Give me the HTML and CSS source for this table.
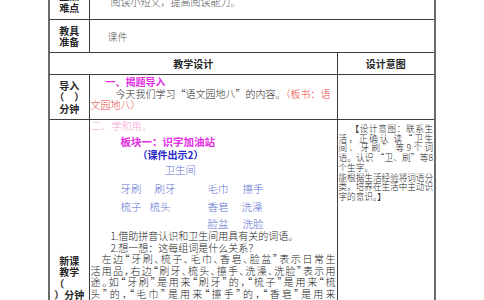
FILE: index.html
```html
<!DOCTYPE html>
<html lang="zh-CN">
<head>
<meta charset="utf-8">
<title>语文园地八 教学设计</title>
<link rel="stylesheet" href="styles.css">
</head>
<body>
<div class="page">
  <table class="plan">
    <colgroup>
      <col class="c-label">
      <col class="c-main">
      <col class="c-note">
    </colgroup>
    <tr class="r-goal">
      <th class="label">重点<br>难点</th>
      <td colspan="2" class="goal">
        <p>认识“卫、刷”等8个生字，积累词语。</p>
        <p>阅读小短文，提高阅读能力。</p>
      </td>
    </tr>
    <tr class="r-tools">
      <th class="label">教具<br>准备</th>
      <td colspan="2" class="tools">课件</td>
    </tr>
    <tr class="r-head">
      <th colspan="2" class="head">教学设计</th>
      <th class="head">设计意图</th>
    </tr>
    <tr class="r-intro">
      <th class="label">导入<br>（　）<br>分钟</th>
      <td class="main intro">
        <p class="step magenta">一、揭题导入</p>
        <p class="intro-text">今天我们学习“语文园地八”的内容。<span class="red">（板书：语<br>文园地八）</span></p>
      </td>
      <td class="note"></td>
    </tr>
    <tr class="r-new">
      <th class="label">新课<br>教学<br><span class="open">（</span><br>）分钟</th>
      <td class="main study">
        <p class="sec pink">二、学和用。</p>
        <p class="block magenta">板块一：识字加油站</p>
        <p class="show blue">（课件出示2）</p>
        <p class="place words-color">卫生间</p>
        <div class="words w1">
          <span class="pair"><span>牙刷</span><span>刷牙</span></span>
          <span class="pair"><span>毛巾</span><span>擦手</span></span>
        </div>
        <div class="words w2">
          <span class="pair"><span>梳子</span><span>梳头</span></span>
          <span class="pair"><span>香皂</span><span>洗澡</span></span>
        </div>
        <div class="words w3">
          <span class="pair"></span>
          <span class="pair"><span>脸盆</span><span>洗脸</span></span>
        </div>
        <div class="text">
          <p class="q">1.借助拼音认识和卫生间用具有关的词语。</p>
          <p class="q">2.想一想：这每组词是什么关系？</p>
          <p class="para">
            <span class="ln first">左边“牙刷、梳子、毛巾、香皂、脸盆”表示日常生</span>
            <span class="ln">活用品，右边“刷牙、梳头、擦手、洗澡、洗脸”表示用</span>
            <span class="ln">途。如“牙刷”是用来“刷牙”的，“梳子”是用来“梳</span>
            <span class="ln">头”的，“毛巾”是用来“擦手”的，“香皂”是用来</span>
            <span class="ln last">“洗澡”的，“脸盆”是用来“洗脸”的。</span>
          </p>
        </div>
      </td>
      <td class="note">
        <p class="why">
          <span class="nl first">【设计意图：联系生</span>
          <span class="nl">活，正确认 读“卫生</span>
          <span class="nl">间、牙刷” 等9个词</span>
          <span class="nl">语。认识 “卫、刷”等8</span>
          <span class="nl last">个生字。</span>
        </p>
        <p class="why">
          <span class="nl">能根据生活经验将词语分</span>
          <span class="nl">类，培养在生活中主动识</span>
          <span class="nl last">字的意识。】</span>
        </p>
      </td>
    </tr>
  </table>
</div>
</body>
</html>
```

FILE: styles.css
```css
html, body {
  margin: 0;
  padding: 0;
  background: #ffffff;
}

body {
  width: 484px;
  height: 300px;
  overflow: hidden;
  font-family: "Noto Sans CJK SC", "Noto Sans", sans-serif;
  font-size: 10px;
  color: #2b2b2b;
}

p {
  margin: 0;
}

.page {
  padding-left: 48px;
}

.plan {
  border-collapse: collapse;
  table-layout: fixed;
  width: 388px;
  margin-top: -17px;
  border-left: 2px solid #6a6a6a;
  border-right: 2px solid #6a6a6a;
}

.c-label { width: 40px; }
.c-main { width: 248px; }
.c-note { width: 98px; }

.plan th,
.plan td {
  border: 1px solid #3d3d3d;
  padding: 0;
  vertical-align: middle;
  font-weight: 300;
}

.plan .label,
.plan .head {
  font-weight: 700;
  text-align: center;
  color: #262626;
  font-size: 10px;
  line-height: 11.5px;
}

.open {
  display: inline-block;
  padding-right: 20px;
}

.r-goal { height: 36px; }
.r-tools { height: 33px; }
.r-head { height: 22px; }
.r-intro { height: 45px; }
.r-new { height: 316px; }

.plan .goal {
  vertical-align: top;
  padding-left: 21px;
  color: #555;
  line-height: 12px;
}

.plan .tools {
  padding-left: 18px;
  color: #555;
}

.plan .main {
  vertical-align: top;
  padding: 0 1px;
  line-height: 12px;
}

.plan .intro {
  padding-top: 1px;
}

.step {
  padding-left: 15px;
  font-weight: 700;
  line-height: 11.5px;
}

.intro-text {
  text-indent: 25px;
  line-height: 11.5px;
}

.magenta { color: #e42ee4; }
.red { color: #e4463e; }
.pink { color: #f2a3d6; }
.blue { color: #2727c9; }
.words-color { color: #5c6fd4; }

.sec {
  padding-left: 1px;
}

.block {
  margin-top: 4px;
  padding-left: 30px;
  font-weight: 700;
  font-size: 10.5px;
}

.show {
  margin-top: 1px;
  padding-left: 47px;
  font-weight: 700;
}

.place {
  margin-top: 3px;
  padding-left: 74px;
  font-size: 10.5px;
}

.words {
  display: grid;
  grid-template-columns: 87px auto;
  padding-left: 30px;
  color: #5c6fd4;
  font-size: 10.5px;
}

.w1 { margin-top: 7px; }
.w2 { margin-top: 6px; }
.w3 { margin-top: 5px; }

.pair {
  display: flex;
  gap: 14px;
}

.w1 .pair:first-child { gap: 13px; }
.w2 .pair:first-child { gap: 8px; }
.w2 .pair:last-child { gap: 13px; }

.text {
  line-height: 11.6px;
  color: #222;
}

.q {
  padding-left: 20px;
}

.para {
  font-feature-settings: "halt";
}

.ln {
  display: block;
  white-space: nowrap;
  text-align: justify;
  text-align-last: justify;
}

.ln.first {
  padding-left: 11px;
}

.ln.last {
  text-align-last: left;
}

.plan .note {
  vertical-align: top;
  padding: 4px 1px 0 1px;
  font-size: 8.6px;
  line-height: 9.7px;
  color: #222;
}

.nl {
  display: block;
  white-space: nowrap;
  text-align: justify;
  text-align-last: justify;
}

.nl.first {
  padding-left: 12px;
}

.nl.last {
  text-align-last: left;
}
```
